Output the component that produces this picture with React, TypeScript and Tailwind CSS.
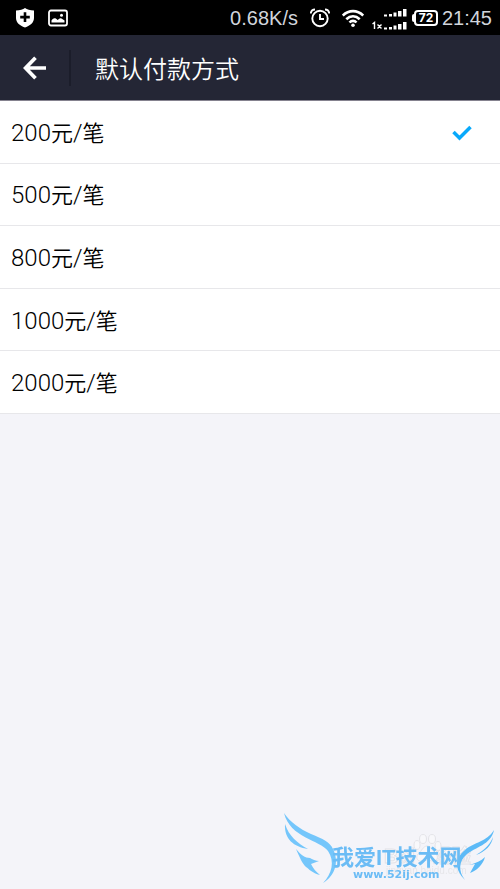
const options = ["200", "500", "800", "1000", "2000"];

function StatusBar() {
  return (
    <div className="flex h-[35px] items-center justify-between bg-black pl-4 pr-2 text-white">
      <div className="flex items-center gap-3.5">
        {/* Shield */}
        <svg className="h-5 w-[18px]" viewBox="0 0 18 20" fill="currentColor">
          <path
            fillRule="evenodd"
            d="M9 0C7 1.4 4 2.2 0 2.4V10c0 4.500 3.500 7.500 9 9.600 5.500-2.100 9-5.100 9-9.600V2.400C14 2.200 11 1.400 9 0ZM7.700 4.300h2.600v3.500h3.500v2.600h-3.500v3.500H7.700v-3.500H4.200V7.800h3.500Z"
          />
        </svg>
        {/* Picture */}
        <svg className="h-[18px] w-5" viewBox="0 0 20 18" fill="none">
          <rect x="1" y="1.500" width="18" height="15" rx="2" stroke="currentColor" strokeWidth="1.800" />
          <path d="M3.500 13.500v-2c1-2.500 4-3.500 6-.5 1.500-.8 2-2.500 4-1.500l3 2v2Z" fill="currentColor" />
          <circle cx="13.500" cy="6.300" r="1.500" fill="currentColor" />
        </svg>
      </div>
      <div className="flex items-center">
        <span className="mr-3 text-xl text-gray-300">0.68K/s</span>
        {/* Alarm */}
        <svg className="mr-3 h-5 w-5" viewBox="0 0 20 20" fill="none" stroke="currentColor" strokeWidth="1.900">
          <circle cx="10" cy="10.500" r="7.700" />
          <path d="M10 6v5h4M.8 5.500C1 3 3 1.500 5 1.500M19.200 5.500C19 3 17 1.500 15 1.500" />
        </svg>
        {/* Wifi */}
        <svg className="mr-2 h-5 w-[22px]" viewBox="0 0 22 20" fill="none" stroke="currentColor" strokeWidth="2.600">
          <path d="M.8 7.500c6-5.800 14.400-5.800 20.400 0M4.300 11.200c4-3.900 9.400-3.900 13.400 0M7.500 14.500c2-2.200 5-2.200 7 0" />
          <circle cx="11" cy="17.200" r="1.800" fill="currentColor" stroke="none" />
        </svg>
        {/* Two SIM signals */}
        <svg className="mr-1 h-6 w-[36px]" viewBox="0 0 36 24" fill="currentColor">
          <path d="M12 8.500h3v2h-3zM17 8h3v2.500h-3zM21.500 6.500h3v4h-3zM26 5h3.500v5.500H26zM31 3h3.500v7.500H31z" />
          <path d="M12 21.500h3v2h-3zM17 21h3v2.500h-3zM21.500 19.500h3v4h-3zM26 18h3.500v5.500H26zM31 16h3.500v7.500H31z" />
          <path d="M.5 18l2-1.500V23M5.500 18.500l4 4M9.500 18.500l-4 4" fill="none" stroke="currentColor" strokeWidth="1.400" />
        </svg>
        {/* Battery */}
        <div className="mr-1 flex items-center">
          <span className="h-2 w-0.5 rounded-l bg-white" />
          <span className="flex h-4 w-6 items-center justify-center rounded border-2 border-white font-['Inter',sans-serif] text-xs font-bold">
            72
          </span>
        </div>
        <span className="text-xl text-gray-300">21:45</span>
      </div>
    </div>
  );
}

function Header() {
  return (
    <header className="flex h-[66px] items-center border-b border-[#85828f] bg-[#242635] text-white">
      <button type="button" aria-label="返回" className="flex h-9 w-[71px] items-center border-r-2 border-[#1b1d2a] pl-[23px]">
        <svg className="h-6 w-6" viewBox="0 0 24 24" fill="none" stroke="currentColor" strokeWidth="3.700">
          <path d="M12.500 1.800L2.600 12l9.900 10.200M2.600 12H23" />
        </svg>
      </button>
      <h1 className="pl-6 pt-1 text-2xl font-[350]">默认付款方式</h1>
    </header>
  );
}

function Watermark() {
  return (
    <svg
      className="pointer-events-none fixed bottom-0 right-0 h-[89px] w-[230px]"
      viewBox="0 0 230 89"
    >
      {/* Pale lettering and paw */}
      <g fill="#f8f8fb" stroke="#e3e3e8" strokeWidth="1">
        <text x="114" y="63" fontSize="20" className="font-bold">Bai</text>
        <text x="163" y="63" fontSize="19" className="font-bold">经验</text>
        <text x="116" y="74" fontSize="10" fill="#e6e6ea" stroke="none">jingyan.baidu.com</text>
        <ellipse cx="147" cy="45" rx="3" ry="4.500" />
        <ellipse cx="153" cy="39" rx="3.500" ry="4.500" />
        <ellipse cx="162" cy="39" rx="3.500" ry="4.500" />
        <ellipse cx="168" cy="46" rx="3" ry="4.500" />
        <path d="M157 46c-4 0-5 5-9 8-3 4 0 8 4 7 4-1 7-1 10 0 5 1 7-4 4-7-4-3-5-8-9-8Z" />
      </g>
      {/* Wings */}
      <g fill="#74c6fb">
        <path d="M14 13C20 22 30 29 41 34c12 5 19 8 22 15 6 12 3 26-10 34 9-9 12-22 5-32C50 40 20 38 14 13Z" />
        <path d="M15 24c4 12 12 19 23 25C24 47 14 39 15 24Z" />
        <path d="M26 49c5 6 9 9 14 9 2 1 6 3 9 3l-8 3c2 4 5 8 9 11-8-2-11-6-14-8-4-4-6-9-10-18Z" />
      </g>
      <g fill="#5cbaf7">
        <path d="M224 30c-7 12-20 12-29 20-11 9-10 20 0 30-7-9-6-19 1-25 9-8 25-10 28-25Z" />
        <path d="M223 37c-1 8-8 15-17 18 6-4 13-8 17-18Z" />
        <path d="M215 57c-2 8-9 14-15 16l5-9-6 1c7-2 12-4 16-8Z" />
      </g>
      <g className="font-bold" fill="#6bbcf5">
        <text x="62" y="65" fontSize="22">我爱IT技术网</text>
        <text x="83" y="78" fontSize="11" className="font-['DejaVu_Sans',sans-serif]">www.52ij.com</text>
      </g>
    </svg>
  );
}

export default function App() {
  return (
    <div className="min-h-screen bg-[#f4f4f9] font-['Liberation_Sans','Noto_Sans_CJK_SC',sans-serif]">
      <StatusBar />
      <Header />
      <main className="grid h-[313px] grid-rows-5">
        {options.map((amount, i) => (
          <label
            key={amount}
            className="flex items-center justify-between border-b border-[#e7e7ea] bg-white pl-[11px] pr-7 pt-0.5 font-['Roboto','Noto_Sans_CJK_SC',sans-serif] text-2xl font-light text-black"
          >
            <span>
              {amount}
              <span className="text-[22px] font-[350]">元</span>/<span className="text-[22px] font-[350]">笔</span>
            </span>
            <input type="radio" name="limit" defaultChecked={i === 0} className="peer sr-only" />
            <svg
              className="invisible h-4 w-5 peer-checked:visible"
              viewBox="0 0 20 16"
              fill="none"
              stroke="#08a9fb"
              strokeWidth="3.500"
            >
              <path d="M1.500 7l6 6L18.500 2" />
            </svg>
          </label>
        ))}
      </main>
      <Watermark />
    </div>
  );
}
